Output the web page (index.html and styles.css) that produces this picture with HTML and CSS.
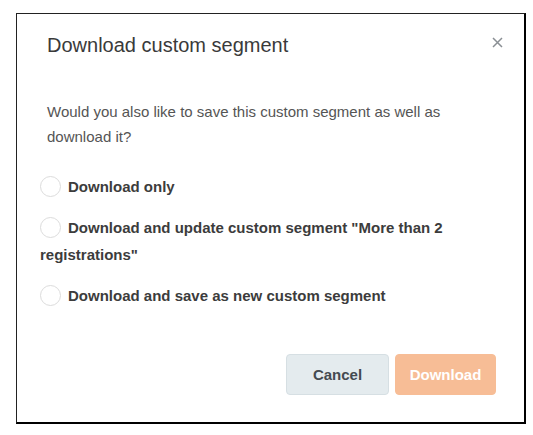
FILE: index.html
```html
<!DOCTYPE html>
<html lang="en">
<head>
    <meta charset="UTF-8">
    <meta name="viewport" content="width=device-width, initial-scale=1.0">
    <title>Download custom segment</title>
    <link rel="stylesheet" href="styles.css">
</head>
<body>
    <div class="modal">
        <div class="modal-header">
            <h2 class="modal-title">Download custom segment</h2>
            <button class="close-button" aria-label="Close">
                <svg width="11" height="11" viewBox="0 0 11 11">
                    <path d="M1 1L10 10M10 1L1 10" stroke="#8a8f94" stroke-width="1.5" fill="none"/>
                </svg>
            </button>
        </div>

        <div class="modal-body">
            <p class="question">Would you also like to save this custom segment as well as download it?</p>

            <div class="options">
                <label class="option"><span class="radio"></span>Download only</label>
                <label class="option"><span class="radio"></span>Download and update custom segment "More than 2 registrations"</label>
                <label class="option"><span class="radio"></span>Download and save as new custom segment</label>
            </div>
        </div>

        <div class="modal-footer">
            <button class="btn btn-cancel">Cancel</button>
            <button class="btn btn-download">Download</button>
        </div>
    </div>
</body>
</html>
```
FILE: styles.css
```css
body {
    margin: 0;
    padding: 13px 0 0 16px;
    background-color: #fff;
    font-family: "Liberation Sans", Arial, sans-serif;
    color: #333;
}

.modal {
    width: 507px;
    height: 408px;
    border-top: 1px solid #222;
    border-left: 1px solid #222;
    border-right: 2px solid #000;
    border-bottom: 2px solid #000;
    display: flex;
    flex-direction: column;
    background-color: #fff;
}

.modal-header {
    display: flex;
    align-items: center;
    justify-content: space-between;
    padding: 17px 21px 0 30px;
}

.modal-title {
    margin: 0;
    font-size: 20px;
    font-weight: normal;
    line-height: 28px;
    color: #3a3a3a;
}

.close-button {
    background: none;
    border: none;
    padding: 0;
    width: 11px;
    height: 11px;
    margin-top: -6px;
    cursor: pointer;
}

.close-button svg {
    display: block;
}

.modal-body {
    padding: 40px 30px 0 30px;
}

.question {
    margin: 0;
    font-size: 15px;
    line-height: 25px;
    color: #555;
}

.options {
    margin: 24px 0 0 -7px;
}

.option {
    display: block;
    font-size: 15px;
    font-weight: bold;
    line-height: 27px;
    color: #3c3c3c;
    margin-bottom: 14px;
}

.radio {
    display: inline-block;
    width: 21px;
    height: 21px;
    border: 1px solid #dcdcdc;
    border-radius: 50%;
    vertical-align: -5px;
    margin-right: 7px;
    box-sizing: border-box;
}

.modal-footer {
    margin-top: auto;
    display: flex;
    justify-content: flex-end;
    gap: 6px;
    padding: 0 28px 27px 0;
}

.btn {
    height: 41px;
    font-family: inherit;
    font-size: 15px;
    font-weight: bold;
    border-radius: 4px;
    cursor: pointer;
}

.btn-cancel {
    width: 103px;
    background-color: #e4ebee;
    border: 1px solid #d6dfe3;
    color: #444a50;
}

.btn-download {
    width: 101px;
    background-color: #f7bd96;
    border: 1px solid #f7bd96;
    color: #fff;
}
```
